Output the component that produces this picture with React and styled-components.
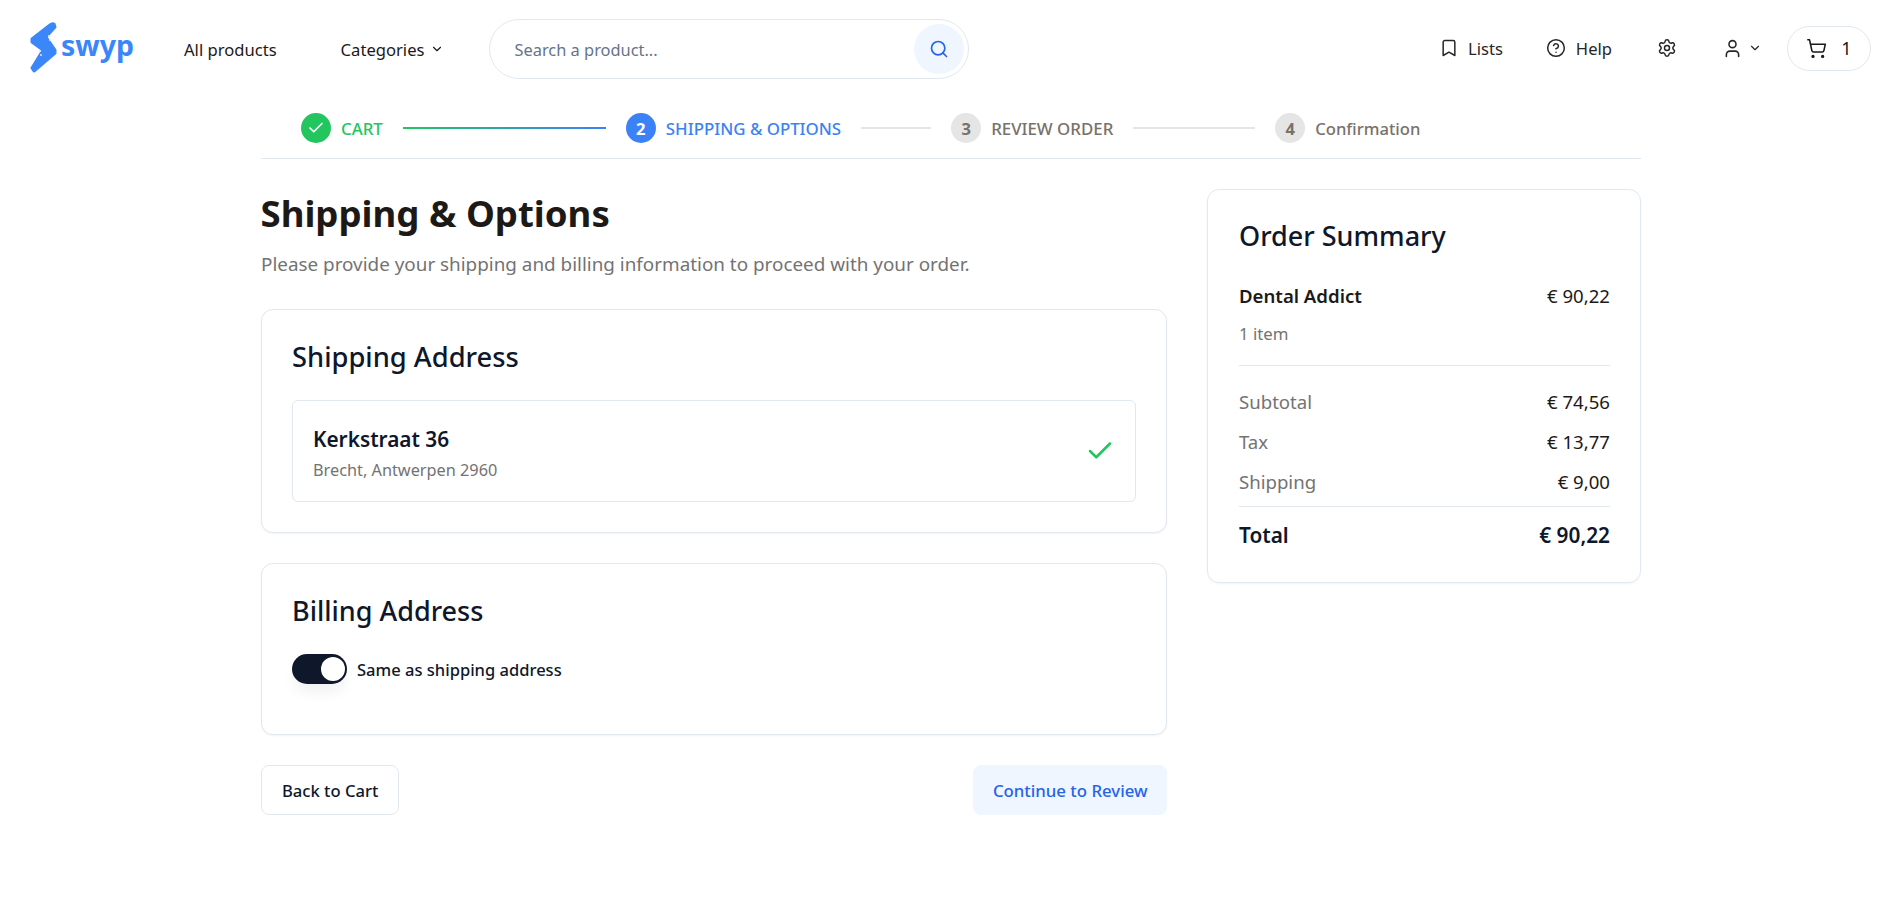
import React from "react";
import styled, { createGlobalStyle } from "styled-components";
import { Bookmark, CircleHelp, Settings, User, ChevronDown, ShoppingCart, Search, Check } from "lucide-react";

const Global = createGlobalStyle`
  html, body { margin: 0; padding: 0; background: #fff; }
  body { font-family: "Noto Sans", "Open Sans", "Liberation Sans", sans-serif; color: #0f172a; }
  * { box-sizing: border-box; }
`;

const Page = styled.div`
  width: 1897px; height: 900px; overflow: hidden; background: #fff;
`;
const Header = styled.header`
  height: 100px; padding: 0 26px 0 30px; display: flex; align-items: center;
`;
const LogoLink = styled.div`
  display: flex; align-items: center; width: 154px; margin-top: -6px;
`;
const LogoWord = styled.span`
  font-size: 28.5px; font-weight: 700; color: #3b86f8; margin-left: 3px; line-height: 1; margin-top: -4px;
`;
const NavItem = styled.span`
  display: inline-flex; align-items: center; gap: 6px; font-size: 16.6px; color: #1c1917; margin: 0 ${p => p.$mr || 0}px 2px 0; white-space: nowrap;
`;
const SearchBox = styled.div`
  width: 480px; height: 60px; margin-bottom: 3px; border: 1px solid #e2e8f0; border-radius: 30px; display: flex; align-items: center; justify-content: space-between;
  padding: 0 4px 0 24px; font-size: 16.4px; color: #64748b;
`;
const SearchText = styled.span`
  margin-top: 1px;
`;
const SearchBtn = styled.span`
  width: 50px; height: 50px; border-radius: 50%; background: #eff6ff; color: #2563eb; display: flex; align-items: center; justify-content: center;
`;
const Right = styled.div`
  margin-left: auto; display: flex; align-items: center; margin-bottom: 4px;
`;
const Action = styled.span`
  display: inline-flex; align-items: center; gap: ${p => p.$gap || 10}px; font-size: 16.6px; color: #292524; margin-right: ${p => p.$mr || 0}px;
`;
const ActionText = styled.span`
  margin-top: 1px;
`;
const CartPill = styled.span`
  width: 84px; height: 45px; border: 1px solid #e2e8f0; border-radius: 23px; display: flex; align-items: center; justify-content: center; gap: 14px; font-size: 18px; color: #1c1917;
`;
const Container = styled.main`
  width: 1380px; margin: 0 0 0 261px;
`;
const Steps = styled.nav`
  height: 59px; padding: 13px 0 0 40px; border-bottom: 1.5px solid #e2e8f0; display: flex; align-items: flex-start;
`;
const Dot = styled.span`
  width: 30px; height: 30px; border-radius: 50%; flex: none; display: flex; align-items: center; justify-content: center; font-size: 16.6px; font-weight: 700;
  background: ${p => p.$bg}; color: ${p => p.$fg};
`;
const StepLabel = styled.span`
  margin: 1px 0 0 10px; font-size: ${p => p.$fs || 16.85}px; font-weight: 500; line-height: 30px; white-space: nowrap; color: ${p => p.$c};
`;
const StepLine = styled.span`
  height: 2px; margin: 14px 20px 0; flex: none; width: ${p => p.$w}px; background: ${p => p.$bg};
`;
const Columns = styled.div`
  display: flex; gap: 40px; align-items: flex-start; padding-top: 30px;
`;
const LeftCol = styled.div`
  width: 906px; flex: none;
`;
const Title = styled.h1`
  margin: 0 0 0 -0.5px; font-size: 36.6px; line-height: 48px; font-weight: 700; color: #1c1917;
`;
const Sub = styled.p`
  margin: 13px 0 0; font-size: 18.88px; line-height: 28px; color: #737373;
`;
const Card = styled.section`
  border: 1px solid #e2e8f0; border-radius: 12px; padding: 29px 30px 0; margin-top: ${p => p.$mt}px; height: ${p => p.$h}px; box-shadow: 0 1px 2px rgba(15,23,42,.05); background: #fff;
`;
const CardTitle = styled.h2`
  margin: 0; font-size: ${p => p.$fs || 27.3}px; line-height: 36px; font-weight: 500; color: #0f172a;
`;
const AddressBox = styled.div`
  margin-top: 25px; height: 102px; border: 1px solid #e2e8f0; border-radius: 6px; padding: 0 20px; display: flex; align-items: center; justify-content: space-between;
`;
const AddressText = styled.div`
  padding-top: 4px;
`;
const AddressName = styled.div`
  font-size: 20.8px; font-weight: 600; line-height: 28px; color: #0f172a;
`;
const AddressSub = styled.div`
  font-size: 16.3px; line-height: 24px; color: #737373; margin-top: 5px;
`;
const ToggleRow = styled.div`
  margin-top: 25px; display: flex; align-items: center; gap: 10px; font-size: 16.55px; font-weight: 500; color: #0f172a;
`;
const Toggle = styled.span`
  width: 55px; height: 30px; border-radius: 15px; background: #0f172a; position: relative; flex: none; box-shadow: 0 10px 15px -3px rgba(15,23,42,.07);
`;
const Knob = styled.span`
  position: absolute; right: 2px; top: 3px; width: 24px; height: 24px; border-radius: 50%; background: #fff;
`;
const Actions = styled.div`
  display: flex; justify-content: space-between; margin-top: 30px;
`;
const Btn = styled.button`
  height: 50px; border-radius: 8px; font-family: inherit; font-size: ${p => p.$primary ? 16.8 : 16.6}px; font-weight: 500; padding: 0 ${p => p.$px}px;
  border: 1px solid ${p => p.$primary ? "#eff6ff" : "#e2e8f0"}; background: ${p => p.$primary ? "#eff6ff" : "#fff"}; color: ${p => p.$primary ? "#2563eb" : "#0f172a"};
`;
const Summary = styled.aside`
  width: 434px; flex: none; height: 394px; border: 1px solid #e2e8f0; border-radius: 12px; padding: 28px 30px 0 31px; box-shadow: 0 1px 2px rgba(15,23,42,.05);
`;
const Row = styled.div`
  display: flex; justify-content: space-between; align-items: center; margin-top: ${p => p.$mt || 0}px; height: ${p => p.$h || 40}px;
  font-size: ${p => p.$fs || 18.6}px; font-weight: ${p => p.$fw || 400}; color: ${p => p.$c || "#1c1917"};
`;
const Regular = styled.span`
  font-weight: 400;
`;
const Muted = styled.span`
  color: #737373; font-size: ${p => p.$fs || 18.6}px; font-weight: 400;
`;
const Rule = styled.div`
  height: 1px; background: #e2e8f0; margin-top: ${p => p.$mt || 0}px;
`;

const Logo = () => (
  <svg width="28" height="54" viewBox="0 0 28 54" fill="none">
    <path d="M24 4 Q22 3 20 5 L2 19 L2 22 L13 30 L2 48 L4 51 L25 33 L25 30 L16 17 L25 7 Z" fill="#3b86f8" stroke="#3b86f8" strokeWidth="3" strokeLinejoin="round" />
    <circle cx="19" cy="16" r="1" fill="#dbeafe" /><circle cx="20" cy="20" r="1" fill="#dbeafe" />
    <circle cx="10" cy="31" r="1" fill="#dbeafe" /><circle cx="11" cy="35" r="1" fill="#dbeafe" />
  </svg>
);

export default function App() {
  return (
    <Page>
      <Global />
      <Header>
        <LogoLink><Logo /><LogoWord>swyp</LogoWord></LogoLink>
        <NavItem $mr={64}>All products</NavItem>
        <NavItem $mr={45}>Categories <ChevronDown size={14} /></NavItem>
        <SearchBox><SearchText>Search a product...</SearchText><SearchBtn><Search size={20} /></SearchBtn></SearchBox>
        <Right>
          <Action $mr={43} $gap={9}><Bookmark size={20} strokeWidth={1.8} /><ActionText>Lists</ActionText></Action>
          <Action $mr={45}><CircleHelp size={20} strokeWidth={1.8} /><ActionText>Help</ActionText></Action>
          <Action $mr={45}><Settings size={20} strokeWidth={1.8} /></Action>
          <Action $mr={25} $gap={5}><User size={21} strokeWidth={1.8} /><ChevronDown size={14} /></Action>
          <CartPill><ShoppingCart size={21} strokeWidth={1.8} />1</CartPill>
        </Right>
      </Header>
      <Container>
        <Steps>
          <Dot $bg="#22c55e" $fg="#fff"><Check size={18} strokeWidth={2.2} /></Dot>
          <StepLabel $c="#22c55e">CART</StepLabel>
          <StepLine $w={203} $bg="linear-gradient(90deg,#22c55e,#3b82f6)" />
          <Dot $bg="#3b82f6" $fg="#fff">2</Dot>
          <StepLabel $c="#3b82f6">SHIPPING &amp; OPTIONS</StepLabel>
          <StepLine $w={70} $bg="#e5e5e5" />
          <Dot $bg="#e5e5e5" $fg="#78716c">3</Dot>
          <StepLabel $c="#78716c">REVIEW ORDER</StepLabel>
          <StepLine $w={122} $bg="#e5e5e5" />
          <Dot $bg="#e5e5e5" $fg="#78716c">4</Dot>
          <StepLabel $c="#78716c" $fs={16.6}>Confirmation</StepLabel>
        </Steps>
        <Columns>
          <LeftCol>
            <Title>Shipping &amp; Options</Title>
            <Sub>Please provide your shipping and billing information to proceed with your order.</Sub>
            <Card $mt={31} $h={224}>
              <CardTitle>Shipping Address</CardTitle>
              <AddressBox>
                <AddressText>
                  <AddressName>Kerkstraat 36</AddressName>
                  <AddressSub>Brecht, Antwerpen 2960</AddressSub>
                </AddressText>
                <Check size={30} color="#22c55e" strokeWidth={2} />
              </AddressBox>
            </Card>
            <Card $mt={30} $h={172}>
              <CardTitle $fs={27}>Billing Address</CardTitle>
              <ToggleRow><Toggle><Knob /></Toggle>Same as shipping address</ToggleRow>
            </Card>
            <Actions>
              <Btn $px={20}>Back to Cart</Btn>
              <Btn $primary $px={18.5}>Continue to Review</Btn>
            </Actions>
          </LeftCol>
          <Summary>
            <CardTitle $fs={27}>Order Summary</CardTitle>
            <Row $mt={21} $fw={600}>Dental Addict<Regular>€ 90,22</Regular></Row>
            <Row $h={36}><Muted $fs={16.8}>1 item</Muted></Row>
            <Rule $mt={14} />
            <Row $mt={15}><Muted>Subtotal</Muted>€ 74,56</Row>
            <Row><Muted>Tax</Muted>€ 13,77</Row>
            <Row><Muted>Shipping</Muted>€ 9,00</Row>
            <Rule $mt={5} />
            <Row $mt={8} $fs={20.8} $fw={600} $c="#0f172a">Total<span>€ 90,22</span></Row>
          </Summary>
        </Columns>
      </Container>
    </Page>
  );
}
